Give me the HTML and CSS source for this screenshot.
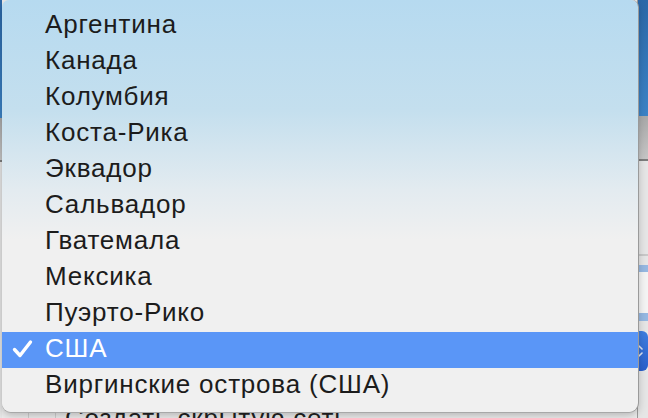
FILE: index.html
```html
<!DOCTYPE html>
<html lang="ru">
<head>
    <meta charset="UTF-8">
    <meta name="viewport" content="width=device-width, initial-scale=1.0">
    <title>Страна</title>
    <link rel="stylesheet" href="styles.css">
</head>
<body>
    <div class="desktop">
        <div class="strip strip-left">
            <div class="band band-blue" style="height: 118px;"></div>
            <div class="band band-gray" style="height: 42px;"></div>
            <div class="band band-light"></div>
        </div>
        <div class="middle">
            <div class="net-row">
                <div class="cell"></div>
                <div class="cell"></div>
                <span class="net-label">Создать скрытую сеть</span>
            </div>
        </div>
        <div class="strip strip-right">
            <div class="band band-blue" style="height: 116px;"></div>
            <div class="band band-gray" style="height: 43px;"></div>
            <div class="band band-light" style="height: 93px;"></div>
            <div class="band band-line"></div>
            <div class="band band-light" style="height: 9px;"></div>
            <div class="band band-pale" style="height: 7px;"></div>
            <div class="band band-white" style="height: 41px;"></div>
            <div class="band band-pale" style="height: 8px;"></div>
            <div class="band band-light" style="height: 10px;"></div>
            <div class="stepper">
                <svg width="6" height="22" viewBox="0 0 6 22">
                    <path d="M1 6 L4 9 M1 16 L4 13" stroke="#dfe6f5" stroke-width="1.6" fill="none" stroke-linecap="round"/>
                </svg>
            </div>
            <div class="band band-light"></div>
        </div>
    </div>

    <ul class="menu">
        <li class="item">Аргентина</li>
        <li class="item">Канада</li>
        <li class="item">Колумбия</li>
        <li class="item">Коста-Рика</li>
        <li class="item">Эквадор</li>
        <li class="item">Сальвадор</li>
        <li class="item">Гватемала</li>
        <li class="item">Мексика</li>
        <li class="item">Пуэрто-Рико</li>
        <li class="item selected">
            <svg class="check" width="22" height="20" viewBox="0 0 22 20">
                <path d="M2.5 10.5 L8 16.5 L18.5 3" stroke="#fff" stroke-width="3.4" fill="none" stroke-linecap="round" stroke-linejoin="round"/>
            </svg>
            США
        </li>
        <li class="item">Виргинские острова (США)</li>
    </ul>
</body>
</html>
```

FILE: styles.css
```css
body {
    margin: 0;
    width: 648px;
    height: 418px;
    overflow: hidden;
    font-family: "Liberation Sans", Arial, sans-serif;
    background-color: #e9e9e9;
}
.desktop {
    display: flex;
    height: 418px;
}
.strip {
    display: flex;
    flex-direction: column;
}
.strip-left {
    width: 2px;
}
.strip-right {
    width: 10px;
    border-left: 1px solid #9c9c9c;
}
.band-blue {
    background: linear-gradient(#2c68a8, #3c83c6);
}
.band-gray {
    background: linear-gradient(#a9a9a9, #c6c6c6);
    border-bottom: 2px solid #7d7d7d;
}
.band-light {
    background-color: #e6e6e6;
    flex-shrink: 0;
}
.strip .band-light:last-child {
    flex: 1;
}
.band-line {
    height: 2px;
    background-color: #c9c9c9;
}
.band-pale {
    background-color: #96b8e2;
}
.band-white {
    background-color: #f4f4f4;
}
.stepper {
    height: 40px;
    background: linear-gradient(#3f7ee0, #2a5fcb);
    border-radius: 0 6px 6px 0;
    display: flex;
    align-items: center;
}
.middle {
    flex: 1;
    background-color: #ececec;
    padding-top: 403px;
}
.net-row {
    display: flex;
    height: 30px;
    line-height: 30px;
}
.cell {
    width: 26px;
    border-right: 1px solid #cfcfcf;
}
.net-label {
    padding-left: 9px;
    font-size: 26px;
    letter-spacing: 0.8px;
    color: #222;
}
.menu {
    position: absolute;
    left: 2px;
    top: 0;
    width: 636px;
    height: 412px;
    margin: 0;
    padding: 8px 0 0 0;
    box-sizing: border-box;
    list-style: none;
    border-radius: 7px 7px 9px 9px;
    background: linear-gradient(#b6daf0 0px, #c4dfee 110px, #e3ebf0 190px, #f0f0f0 240px, #f0f0f0 412px);
    box-shadow: 1px 0 0 #9a9a9a, 0 1px 0 #a8a8a8, 0 3px 8px rgba(0, 0, 0, 0.25);
}
.item {
    position: relative;
    height: 36px;
    line-height: 32px;
    padding-left: 43px;
    font-size: 26px;
    letter-spacing: 0.8px;
    color: #1c1c1c;
}
.selected {
    background-color: #5a96f7;
    color: #fff;
}
.check {
    position: absolute;
    left: 10px;
    top: 7px;
}
```
